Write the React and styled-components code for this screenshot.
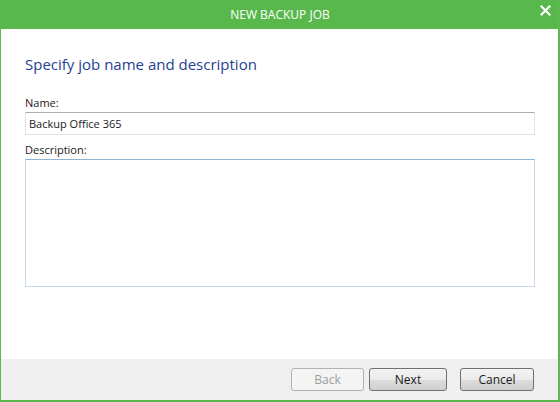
import React from "react";
import styled, { createGlobalStyle } from "styled-components";

const GlobalStyle = createGlobalStyle`
    html, body {
        margin: 0;
        padding: 0;
        background: #ffffff;
    }
    body {
        font-family: "Open Sans", "Noto Sans", sans-serif;
    }
`;

const App = () => {
    return (
        <>
            <GlobalStyle />
            <Window>
                <TitleBar>
                    <TitleText>NEW BACKUP JOB</TitleText>
                    <CloseButton aria-label="Close">
                        <svg width="11" height="11" viewBox="0 0 11 11">
                            <path d="M1.5 1.5 L9.5 9.5 M9.5 1.5 L1.5 9.5" stroke="#ffffff" strokeWidth="2.2" strokeLinecap="square" />
                        </svg>
                    </CloseButton>
                </TitleBar>

                <Body>
                    <Heading>Specify job name and description</Heading>

                    <Field>
                        <Label>Name:</Label>
                        <TextInput defaultValue="Backup Office 365" />
                    </Field>

                    <Field>
                        <Label>Description:</Label>
                        <TextArea />
                    </Field>
                </Body>

                <Footer>
                    <Button $w={73} disabled>Back</Button>
                    <Button $w={78}>Next</Button>
                    <Button $w={74} $gap>Cancel</Button>
                </Footer>
            </Window>
        </>
    );
};

export default App;

// styles
const Window = styled.div`
    width: 560px;
    height: 402px;
    box-sizing: border-box;
    display: flex;
    flex-direction: column;
    background: #ffffff;
    border: 1px solid #5cb84f;
    border-top: none;
    border-right-width: 2px;
    border-bottom-width: 2px;
    overflow: hidden;
`;

const TitleBar = styled.div`
    height: 29px;
    flex-shrink: 0;
    background: #58b84b;
    display: flex;
    align-items: center;
    justify-content: center;
    position: relative;
    margin: 0 -2px 0 -1px;
`;

const TitleText = styled.div`
    color: #ffffff;
    font-size: 12px;
    letter-spacing: 0;
`;

const CloseButton = styled.div`
    position: absolute;
    right: 9px;
    top: 5px;
    width: 11px;
    height: 11px;
    display: flex;
`;

const Body = styled.div`
    flex: 1;
    padding: 24px 23px 0 24px;
    display: flex;
    flex-direction: column;
`;

const Heading = styled.h1`
    margin: 0 0 20px 0;
    font-size: 15px;
    font-weight: 400;
    color: #1f3f91;
    line-height: 22px;
`;

const Field = styled.div`
    display: flex;
    flex-direction: column;
    margin-bottom: 7px;
`;

const Label = styled.label`
    font-size: 11px;
    color: #1a1a1a;
    line-height: 15px;
    margin-bottom: 2px;
`;

const TextInput = styled.input`
    box-sizing: border-box;
    height: 23px;
    width: 100%;
    padding: 0 3px;
    border: 1px solid #e2e3ea;
    border-top-color: #abadb3;
    font-family: "Open Sans", "Noto Sans", sans-serif;
    font-size: 11px;
    color: #1a1a1a;
    outline: none;
`;

const TextArea = styled.textarea`
    box-sizing: border-box;
    height: 128px;
    width: 100%;
    resize: none;
    border: 1px solid #c7d7e6;
    border-top-color: #8fb4d3;
    font-family: "Open Sans", "Noto Sans", sans-serif;
    font-size: 11px;
    outline: none;
`;

const Footer = styled.div`
    height: 41px;
    flex-shrink: 0;
    background: #efefef;
    display: flex;
    align-items: center;
    justify-content: flex-end;
    gap: 5px;
    padding: 0 24px 0 0;
`;

const Button = styled.button`
    box-sizing: border-box;
    width: ${(p) => p.$w}px;
    height: 23px;
    margin-left: ${(p) => (p.$gap ? "8px" : "0")};
    border: 1px solid #707070;
    border-radius: 3px;
    background: linear-gradient(#f2f2f2 0%, #ebebeb 50%, #dddddd 51%, #cfcfcf 100%);
    font-family: "Open Sans", "Noto Sans", sans-serif;
    font-size: 12px;
    color: #1a1a1a;
    padding: 0;
    &:disabled {
        border-color: #adb2b5;
        background: #f4f4f4;
        color: #9d9d9d;
    }
`;
